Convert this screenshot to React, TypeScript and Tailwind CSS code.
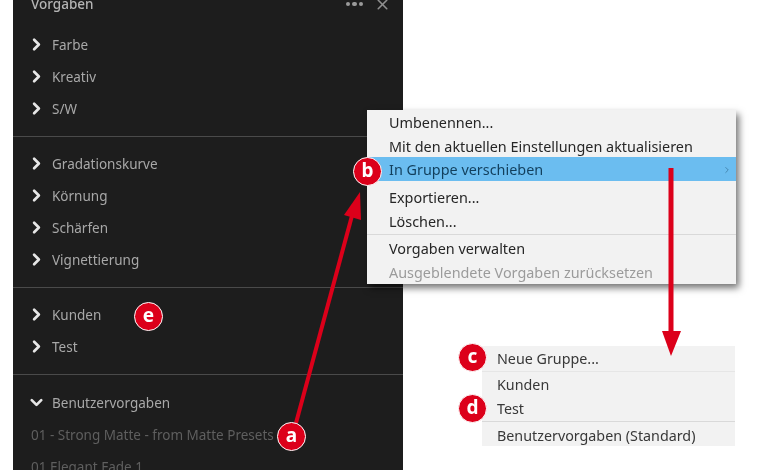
import { ChevronDown, ChevronRight, X } from "lucide-react";

const groups = [
  ["Farbe", "Kreativ", "S/W"],
  ["Gradationskurve", "Körnung", "Schärfen", "Vignettierung"],
  ["Kunden", "Test"],
];

function Row({ label }: { label: string }) {
  return (
    <div className="flex h-8 items-center">
      <ChevronRight className="ml-[14px] mb-[2px] h-[19px] w-[19px] text-[#e6e6e6]" strokeWidth={3.4} />
      <span className="ml-[6px] text-[13.5px] text-[#a8a8a8]">{label}</span>
    </div>
  );
}

function Badge({ letter, className }: { letter: string; className: string }) {
  return (
    <div
      className={`absolute flex h-[29px] w-[29px] items-center justify-center rounded-full border-[1.5px] border-white bg-[#dc001a] pb-[2px] text-[19px] font-bold leading-none text-white ${className}`}
    >
      {letter}
    </div>
  );
}

export default function App() {
  return (
    <div className="relative h-[470px] w-[780px] overflow-hidden bg-white font-['Noto_Sans',sans-serif] blur-[0.35px]">
      <aside className="ml-[13px] h-[470px] w-[390px] overflow-hidden bg-[#1d1d1d]">
        <header className="flex h-[29px] items-center justify-between pb-[21px] pl-[18px] pr-[12px]">
          <span className="text-[13.5px] font-medium text-[#b4b4b4]">Vorgaben</span>
          <div className="flex items-center gap-[11px]">
            <div className="flex gap-[2px]">
              <i className="h-[4.5px] w-[4.5px] rounded-full bg-[#9a9a9a]" />
              <i className="h-[4.5px] w-[4.5px] rounded-full bg-[#9a9a9a]" />
              <i className="h-[4.5px] w-[4.5px] rounded-full bg-[#9a9a9a]" />
            </div>
            <X className="h-[17px] w-[17px] text-[#8f8f8f]" strokeWidth={2.2} />
          </div>
        </header>
        {groups.map((rows, i) => (
          <section key={rows[0]} className={`border-b border-[#4a4a4a] pb-[11px] ${i > 0 ? "pt-[11px]" : ""}`}>
            {rows.map((label) => (
              <Row key={label} label={label} />
            ))}
          </section>
        ))}
        <section className="pt-[12px]">
          <div className="flex h-8 items-center">
            <ChevronDown className="ml-[14px] mb-[2px] h-[19px] w-[19px] text-[#e6e6e6]" strokeWidth={3.4} />
            <span className="ml-[6px] text-[13.5px] text-[#a8a8a8]">Benutzervorgaben</span>
          </div>
          <div className="flex h-8 items-center pl-[18px] text-[13.5px] text-[#5f5f5f]">
            01 - Strong Matte - from Matte Presets
          </div>
          <div className="flex h-8 items-center pl-[18px] text-[13.5px] text-[#5f5f5f]">01 Elegant Fade 1</div>
        </section>
      </aside>

      {/* context menu */}
      <div className="absolute left-[367px] top-[110px] w-[369px] bg-[#f2f2f2] text-[14.4px] text-[#262626] shadow-[3px_4px_7px_rgba(0,0,0,0.55)]">
        <div className="h-[23.5px] pl-[22px] leading-[25.5px]">Umbenennen...</div>
        <div className="h-[23.5px] pl-[22px] leading-[25.5px]">Mit den aktuellen Einstellungen aktualisieren</div>
        <div className="flex h-[24px] items-center justify-between bg-[#6bbdf0] pl-[22px] pr-[4px] pt-[2px] text-[#123f5c]">
          In Gruppe verschieben
          <ChevronRight className="h-[10px] w-[10px] text-[#3f7ea6]" strokeWidth={2} />
        </div>
        <div className="mt-[4.5px] pl-[22px] leading-[23px]">Exportieren...</div>
        <div className="h-[23px] pl-[22px] leading-[25px]">Löschen...</div>
        <div className="mt-[2.5px] h-[26px] border-t border-[#d9d9d9] pl-[22px] pt-[1px] leading-[26px]">Vorgaben verwalten</div>
        <div className="h-[24px] pl-[22px] leading-[26px] text-[#9b9b9b]">Ausgeblendete Vorgaben zurücksetzen</div>
      </div>

      {/* submenu */}
      <div className="absolute left-[482px] top-[346px] w-[253px] bg-[#f2f2f2] text-[14.3px] text-[#383838]">
        <div className="h-[23px] pl-[15px] leading-[25px]">Neue Gruppe...</div>
        <div className="mt-[2px] h-[25px] border-t border-[#e6e6e6] pl-[15px] leading-[26px]">Kunden</div>
        <div className="h-[24px] pl-[15px] leading-[26px]">Test</div>
        <div className="mt-[1px] h-[25px] border-t border-[#d9d9d9] pl-[15px] pt-[1px] leading-[25px]">Benutzervorgaben (Standard)</div>
      </div>

      {/* annotation arrows */}
      <svg className="absolute left-0 top-0 h-[470px] w-[780px]" viewBox="0 0 780 470" fill="none">
        <path d="M296 423 L353 212" stroke="#dc001a" strokeWidth="4" />
        <path d="M360 192 L344 215 L361 220 Z" fill="#dc001a" />
        <path d="M671 168 V335" stroke="#dc001a" strokeWidth="5" />
        <path d="M662 331 H681 L671 356 Z" fill="#dc001a" />
      </svg>

      <Badge letter="a" className="left-[277px] top-[422px]" />
      <Badge letter="b" className="left-[353px] top-[157px]" />
      <Badge letter="c" className="left-[458px] top-[343px]" />
      <Badge letter="d" className="left-[458px] top-[394px]" />
      <Badge letter="e" className="left-[134px] top-[302px]" />
    </div>
  );
}
